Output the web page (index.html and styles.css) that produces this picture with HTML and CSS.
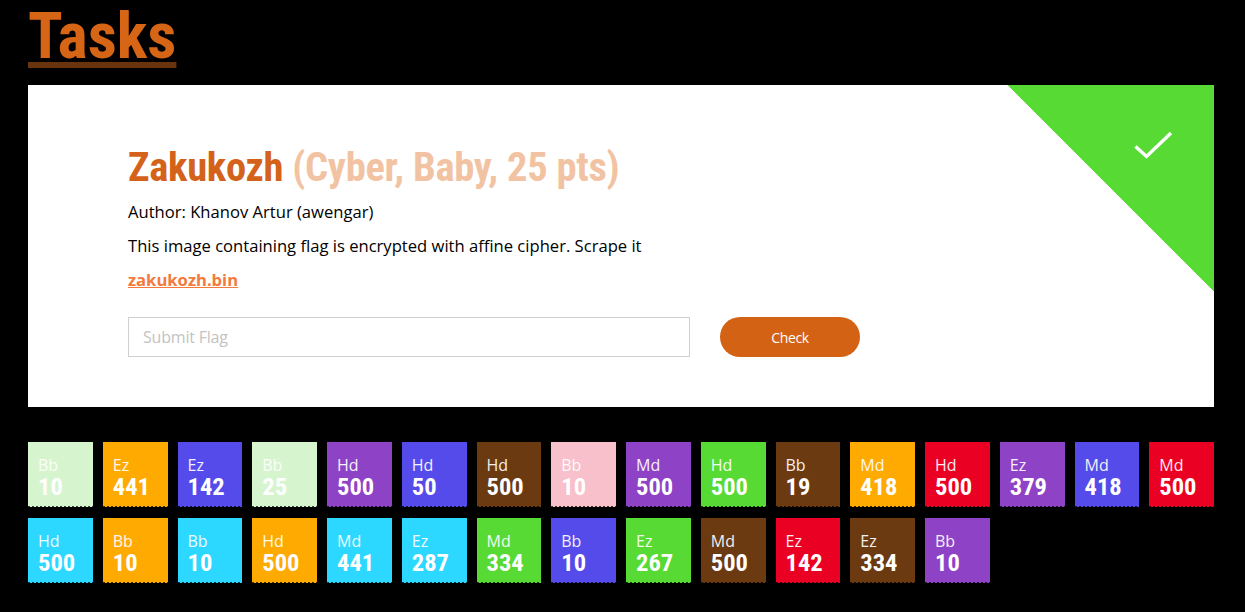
FILE: index.html
```html
<!DOCTYPE html>
<html>
<head>
<meta charset="utf-8">
<link rel="stylesheet" href="styles.css">
</head>
<body>
<div class="page">
  <h1 class="page-title">Tasks</h1>
  <div class="card">
    <div class="solved">
      <svg class="check" width="40" height="30" viewBox="0 0 40 30"><path d="M1.5 15.5 L12.5 25.5 L37 2" fill="none" stroke="#fff" stroke-width="3.4"/></svg>
    </div>
    <h2 class="task-title">Zakukozh <span class="meta">(Cyber, Baby, 25 pts)</span></h2>
    <p class="line">Author: Khanov Artur (awengar)</p>
    <p class="line">This image containing flag is encrypted with affine cipher. Scrape it</p>
    <p class="line"><a class="file" href="#">zakukozh.bin</a></p>
    <form class="flag-form">
      <input class="flag-input" type="text" placeholder="Submit Flag">
      <button class="check-btn" type="button">Check</button>
    </form>
  </div>
  <div class="tiles">
    <div class="tile c-lg"><span class="lvl">Bb</span><span class="pts">10</span></div>
    <div class="tile c-or"><span class="lvl">Ez</span><span class="pts">441</span></div>
    <div class="tile c-bl"><span class="lvl">Ez</span><span class="pts">142</span></div>
    <div class="tile c-lg"><span class="lvl">Bb</span><span class="pts">25</span></div>
    <div class="tile c-pu"><span class="lvl">Hd</span><span class="pts">500</span></div>
    <div class="tile c-bl"><span class="lvl">Hd</span><span class="pts">50</span></div>
    <div class="tile c-br"><span class="lvl">Hd</span><span class="pts">500</span></div>
    <div class="tile c-pk"><span class="lvl">Bb</span><span class="pts">10</span></div>
    <div class="tile c-pu"><span class="lvl">Md</span><span class="pts">500</span></div>
    <div class="tile c-gr"><span class="lvl">Hd</span><span class="pts">500</span></div>
    <div class="tile c-br"><span class="lvl">Bb</span><span class="pts">19</span></div>
    <div class="tile c-or"><span class="lvl">Md</span><span class="pts">418</span></div>
    <div class="tile c-rd"><span class="lvl">Hd</span><span class="pts">500</span></div>
    <div class="tile c-pu"><span class="lvl">Ez</span><span class="pts">379</span></div>
    <div class="tile c-bl"><span class="lvl">Md</span><span class="pts">418</span></div>
    <div class="tile c-rd"><span class="lvl">Md</span><span class="pts">500</span></div>
    <div class="tile c-cy"><span class="lvl">Hd</span><span class="pts">500</span></div>
    <div class="tile c-or"><span class="lvl">Bb</span><span class="pts">10</span></div>
    <div class="tile c-cy"><span class="lvl">Bb</span><span class="pts">10</span></div>
    <div class="tile c-or"><span class="lvl">Hd</span><span class="pts">500</span></div>
    <div class="tile c-cy"><span class="lvl">Md</span><span class="pts">441</span></div>
    <div class="tile c-cy"><span class="lvl">Ez</span><span class="pts">287</span></div>
    <div class="tile c-gr"><span class="lvl">Md</span><span class="pts">334</span></div>
    <div class="tile c-bl"><span class="lvl">Bb</span><span class="pts">10</span></div>
    <div class="tile c-gr"><span class="lvl">Ez</span><span class="pts">267</span></div>
    <div class="tile c-br"><span class="lvl">Md</span><span class="pts">500</span></div>
    <div class="tile c-rd"><span class="lvl">Ez</span><span class="pts">142</span></div>
    <div class="tile c-br"><span class="lvl">Ez</span><span class="pts">334</span></div>
    <div class="tile c-pu"><span class="lvl">Bb</span><span class="pts">10</span></div>
  </div>
</div>
</body>
</html>
```
FILE: styles.css
```css
html, body {
  margin: 0;
  padding: 0;
  background: #000;
}
body {
  font-family: "Open Sans", "Noto Sans", sans-serif;
}
.page {
  width: 1186px;
  margin-left: 28px;
}
.page-title {
  margin: 0;
  font-family: "Roboto Condensed", "Roboto", sans-serif;
  font-stretch: condensed;
  font-weight: 700;
  font-size: 64px;
  line-height: 74px;
  color: #d76516;
  text-decoration: underline;
  text-decoration-color: #69330d;
  text-decoration-thickness: 6px;
  text-underline-offset: 4px;
  text-decoration-skip-ink: none;
}
.card {
  position: relative;
  margin-top: 11px;
  background: #fff;
  height: 322px;
  box-sizing: border-box;
  padding: 58px 0 0 100px;
  overflow: hidden;
}
.solved {
  position: absolute;
  top: 0;
  right: 0;
  width: 206px;
  height: 206px;
  background: linear-gradient(to bottom left, #58da34 50%, transparent 50%);
}
.check {
  position: absolute;
  left: 126px;
  top: 46px;
}
.task-title {
  margin: 0;
  font-family: "Roboto Condensed", "Roboto", sans-serif;
  font-stretch: condensed;
  font-weight: 700;
  font-size: 40.6px;
  line-height: 48px;
  color: #d5621a;
  letter-spacing: -0.3px;
}
.meta {
  color: #f2c3a2;
}
.line {
  margin: 0;
  font-size: 16.6px;
  line-height: 20px;
  color: #000;
}
.task-title + .line {
  margin-top: 11px;
}
.line + .line {
  margin-top: 14px;
}
.file {
  color: #f47a3b;
  font-weight: 700;
  text-decoration: underline;
}
.flag-form {
  display: flex;
  gap: 30px;
  margin-top: 27px;
}
.flag-input {
  width: 562px;
  height: 40px;
  box-sizing: border-box;
  border: 1px solid #d0d0d0;
  padding: 0 14px;
  font-family: "Open Sans", sans-serif;
  font-size: 16px;
  letter-spacing: -0.2px;
  color: #333;
  outline: none;
}
.flag-input::placeholder {
  color: #c3c3c3;
}
.check-btn {
  width: 140px;
  height: 40px;
  border: none;
  border-radius: 20px;
  background: #d46215;
  color: #fff;
  font-family: "Open Sans", sans-serif;
  font-size: 14px;
  letter-spacing: -0.4px;
}
.tiles {
  display: grid;
  grid-template-columns: repeat(16, 1fr);
  column-gap: 10px;
  row-gap: 11px;
  margin-top: 35px;
}
.tile {
  position: relative;
  height: 65px;
  box-sizing: border-box;
  padding: 14px 0 0 10px;
  display: flex;
  flex-direction: column;
  color: #fff;
}
.tile::after {
  content: "";
  position: absolute;
  left: 0;
  right: 0;
  bottom: 0;
  height: 1px;
  background: repeating-linear-gradient(to right, rgba(0,0,0,0.75) 0 2px, transparent 2px 4px);
}
.lvl {
  font-family: "Open Sans", sans-serif;
  font-size: 16px;
  line-height: 18px;
  opacity: 0.92;
}
.pts {
  font-family: "Roboto Condensed", "Roboto", sans-serif;
  font-stretch: condensed;
  font-weight: 700;
  font-size: 24.5px;
  line-height: 26px;
}
.c-lg { background: #d6f5cf; }
.c-or { background: #ffaa00; }
.c-bl { background: #554bea; }
.c-pu { background: #8e42c6; }
.c-br { background: #6b3a11; }
.c-pk { background: #f8c0ca; }
.c-gr { background: #57da34; }
.c-rd { background: #ea0023; }
.c-cy { background: #2cd8ff; }
```
